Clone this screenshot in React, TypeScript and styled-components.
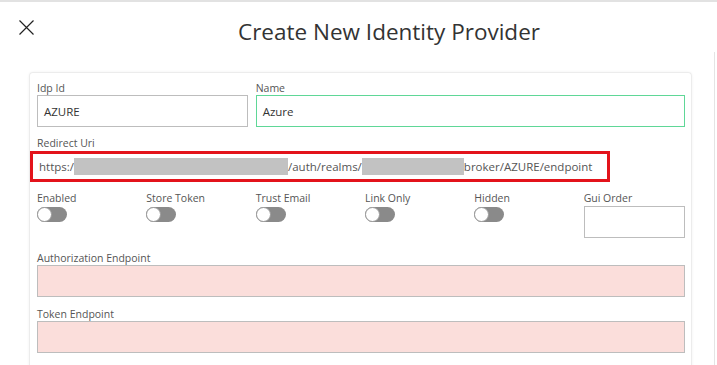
import React from "react";
import styled, { createGlobalStyle } from "styled-components";

const GlobalStyle = createGlobalStyle`
  html, body { margin: 0; padding: 0; background: #ffffff; }
  body { font-family: "Open Sans", "Noto Sans", sans-serif; }
  * { box-sizing: border-box; }
`;

const Page = styled.div`
  display: flex;
  width: 717px;
  height: 365px;
  overflow: hidden;
  border-top: 2px solid #e2e2e2;
  background: #fff;
`;

const Main = styled.div`
  flex: 1;
  display: flex;
  flex-direction: column;
  min-width: 0;
`;

const Rail = styled.div`
  width: 3px;
  margin-top: 50px;
  border-left: 1px solid #e4e4e4;
`;

const Header = styled.header`
  flex-shrink: 0;
  display: flex;
  align-items: flex-start;
  height: 70px;
  padding: 18px 0 0 19px;
`;

const CloseButton = styled.button`
  display: flex;
  width: 15px;
  height: 15px;
  padding: 0;
  border: 0;
  background: none;
  cursor: pointer;
`;

const Title = styled.h1`
  margin: -3px 0 0 204px;
  font-size: 22.5px;
  font-weight: 400;
  line-height: 30px;
  color: #333;
  white-space: nowrap;
`;

const Card = styled.section`
  flex-shrink: 0;
  margin-left: 29px;
  width: 663px;
  padding: 8px 6px 0 7px;
  border: 1px solid #ececec;
  border-bottom: 0;
  border-radius: 4px 4px 0 0;
  box-shadow: 0 0 3px rgba(0, 0, 0, 0.06);
  display: flex;
  flex-direction: column;
`;

const Row = styled.div<{ $after?: number }>`
  display: grid;
  grid-template-columns: repeat(6, 1fr);
  column-gap: 8px;
  margin-bottom: ${(p) => p.$after ?? 9}px;
`;

const Field = styled.div<{ $span: number }>`
  grid-column: span ${(p) => p.$span};
  display: flex;
  flex-direction: column;
  min-width: 0;
`;

const Label = styled.label`
  font-size: 10.5px;
  line-height: 14px;
  color: #555;
  white-space: nowrap;
`;

const Input = styled.div<{ $tone?: "default" | "valid" | "invalid" }>`
  height: 32px;
  display: flex;
  align-items: center;
  padding: 0 6px;
  font-size: 11.5px;
  color: #333;
  border: 1px solid
    ${(p) => (p.$tone === "valid" ? "#5fd797" : "#bdbdbd")};
  background: ${(p) => (p.$tone === "invalid" ? "#fbdedb" : "#fff")};
`;

const RedirectBox = styled.div`
  margin: 1px 0 0 -7px;
  width: 580px;
  height: 31px;
  border: 3px solid #e3131b;
  display: flex;
  align-items: center;
  padding-left: 6px;
  font-size: 11.5px;
  color: #555;
  white-space: nowrap;
`;

const Redacted = styled.span<{ $w: number }>`
  display: inline-block;
  width: ${(p) => p.$w}px;
  height: 17px;
  background: #c2c2c2;
`;

const ToggleTrack = styled.span`
  position: relative;
  margin-top: 2px;
  width: 30px;
  height: 15px;
  border-radius: 8px;
  background: #8a8a8a;
`;

const ToggleKnob = styled.span`
  position: absolute;
  left: 0;
  top: 0;
  width: 15px;
  height: 15px;
  border-radius: 50%;
  background: #fff;
  border: 1px solid #9a9a9a;
`;

const Toggle = () => (
  <ToggleTrack>
    <ToggleKnob />
  </ToggleTrack>
);

const GuiInput = styled(Input)`
  margin-top: 1px;
`;

const toggles = ["Enabled", "Store Token", "Trust Email", "Link Only", "Hidden"];

export default function App() {
  return (
    <>
      <GlobalStyle />
      <Page>
        <Main>
          <Header>
            <CloseButton aria-label="Close">
              <svg width="15" height="15" viewBox="0 0 15 15">
                <path d="M0.5 0.5 L14.5 14.5 M14.5 0.5 L0.5 14.5" stroke="#222" strokeWidth="1.2" fill="none" />
              </svg>
            </CloseButton>
            <Title>Create New Identity Provider</Title>
          </Header>
          <Card>
            <Row>
              <Field $span={2}>
                <Label>Idp Id</Label>
                <Input>AZURE</Input>
              </Field>
              <Field $span={4}>
                <Label>Name</Label>
                <Input $tone="valid">Azure</Input>
              </Field>
            </Row>
            <Row>
              <Field $span={6}>
                <Label>Redirect Uri</Label>
                <RedirectBox>
                  https:/
                  <Redacted $w={214} />
                  /auth/realms/
                  <Redacted $w={102} />
                  broker/AZURE/endpoint
                </RedirectBox>
              </Field>
            </Row>
            <Row $after={13}>
              {toggles.map((t) => (
                <Field $span={1} key={t}>
                  <Label>{t}</Label>
                  <Toggle />
                </Field>
              ))}
              <Field $span={1}>
                <Label>Gui Order</Label>
                <GuiInput />
              </Field>
            </Row>
            <Row $after={10}>
              <Field $span={6}>
                <Label>Authorization Endpoint</Label>
                <Input $tone="invalid" />
              </Field>
            </Row>
            <Row $after={10}>
              <Field $span={6}>
                <Label>Token Endpoint</Label>
                <Input $tone="invalid" />
              </Field>
            </Row>
            <Row>
              <Field $span={6}>
                <Label>Logout Endpoint</Label>
                <Input />
              </Field>
            </Row>
          </Card>
        </Main>
        <Rail />
      </Page>
    </>
  );
}
